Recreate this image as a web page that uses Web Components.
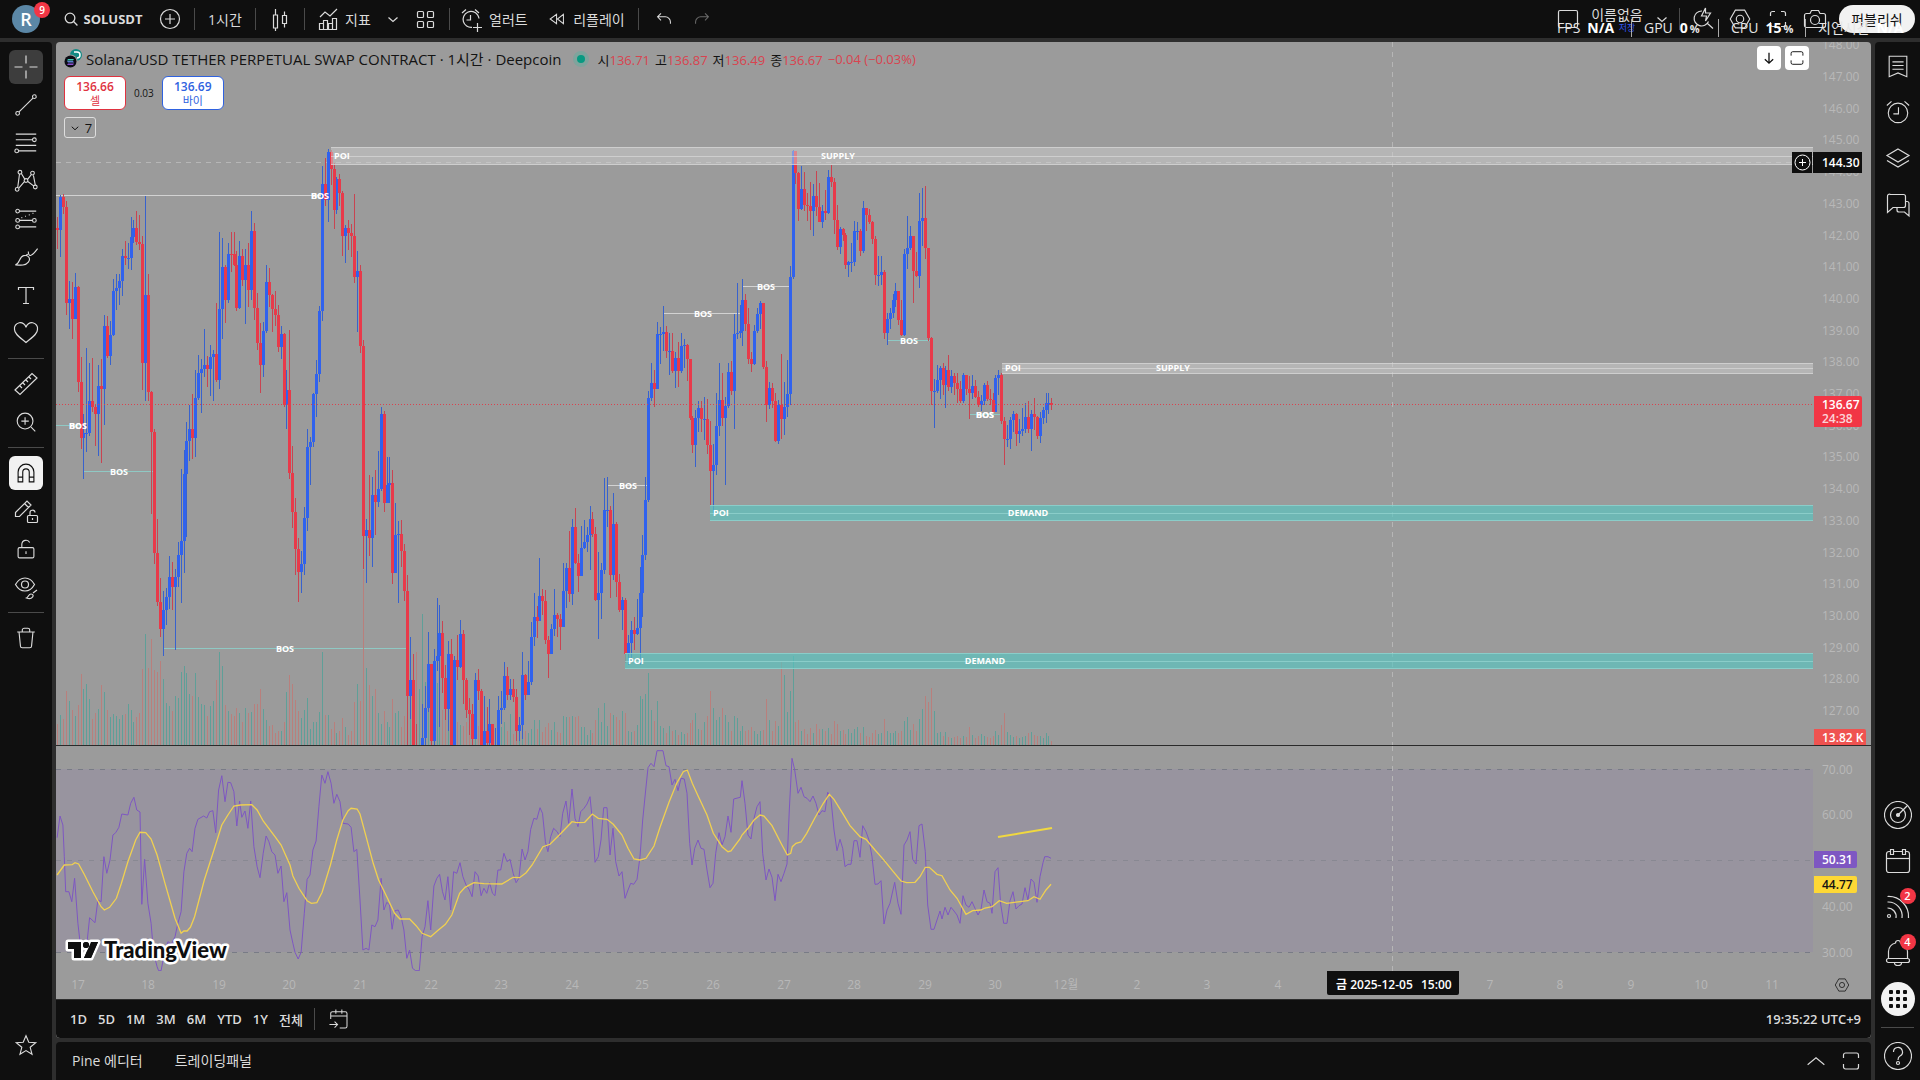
<!DOCTYPE html>
<html lang="ko">
<head>
<meta charset="utf-8">
<title>SOLUSDT</title>
<style>
  html, body { margin: 0; height: 100%; background: #2e2e2e; }
  body { font-family: "Open Sans", "Noto Sans CJK KR", sans-serif; font-size: 14px; color: #dbdbdb; }
</style>
</head>
<body>
<trading-app></trading-app>

<script>
// icons, all on a 28x28 grid
const ICONS = {
  search: '<circle cx="12.500" cy="12.500" r="7.500" stroke-width="2"/><path d="M18 18l6 6" stroke-width="2"/>',
  plus: '<circle cx="14" cy="14" r="9.500"/><path d="M14 9v10M9 14h10"/>',
  candles: '<path d="M7.500 10h4v13h-4zM9.500 4v6M9.500 23v3M16.500 10.500h4v8h-4zM18.500 6.500v4M18.500 18.500v4"/>',
  indicators: '<path d="M6 12l5-5 5 4 7-7M5.500 18.500h4v6h-4zM9.500 15.500h4v9h-4zM14.500 18.500h4v6h-4zM18.500 13.500h4v11h-4z"/>',
  down: '<path d="M9.500 12.500l4.500 4 4.500-4"/>',
  fold: '<path d="M7.500 11.500l6.500 6 6.500-6" stroke-width="2"/>',
  grid: '<rect x="6.500" y="6.500" width="6" height="6" rx="1"/><rect x="16.500" y="6.500" width="6" height="6" rx="1"/><rect x="6.500" y="16.500" width="6" height="6" rx="1"/><rect x="16.500" y="16.500" width="6" height="6" rx="1"/>',
  alertAdd: '<path d="M20.600 9.800A8 8 0 1 0 15 22.400M22 13.500a8 8 0 0 0-1.400-3.700M13.500 10v5h-4M20.500 18v9M16 22.500h9M5 8l4-3.500M18 4.500L22 8"/>',
  replay: '<path d="M13.500 8.500v11L6 14zM21.500 8.500v11L14.500 14z"/>',
  undo: '<path d="M10.500 7.500l-4 4 4 4M7 11.500h8.500a6 6 0 0 1 6 6v2"/>',
  redo: '<path d="M17.500 7.500l4 4-4 4M21 11.500h-8.500a6 6 0 0 0-6 6v2"/>',
  layout: '<rect x="4.500" y="5.500" width="19" height="17" rx="1.500"/>',
  quick: '<path d="M14 6a7.500 7.500 0 1 0 6.500 10.500M19 18l6 5.500M17.500 3l-4 8h5l-1 5 5-8h-5z"/>',
  gear: '<path d="M9 4.500h10l5.500 9.500-5.500 9.500H9L3.500 14z"/><circle cx="14" cy="14" r="4"/>',
  full: '<path d="M6.500 11V8.500a2 2 0 0 1 2-2H11M17 6.500h2.500a2 2 0 0 1 2 2V11M21.500 17v2.500a2 2 0 0 1-2 2H17M11 21.500H8.500a2 2 0 0 1-2-2V17"/>',
  camera: '<path d="M5.500 8.500H9l1.500-3h7l1.500 3h3.500a2 2 0 0 1 2 2v10a2 2 0 0 1-2 2h-17a2 2 0 0 1-2-2v-10a2 2 0 0 1 2-2z"/><circle cx="14" cy="15" r="4.500"/>',
  cross: '<path d="M14 2.500v8M14 17.500v8M2.500 14h8M17.500 14h8"/>',
  line: '<path d="M6.500 21.500L21.500 6.500"/><circle cx="5" cy="23" r="2"/><circle cx="23" cy="5" r="2"/>',
  fib: '<path d="M3 4.500h22M3 10.500h18M3 16.500h22M6 22.500h19"/><circle cx="23" cy="10.500" r="2"/><circle cx="4" cy="22.500" r="2"/>',
  pattern: '<path d="M7 6.500l-2 15M6.500 21.500l6-7M9 6l4 6.500M15.500 12.500l4-5M22 8l2 10.500M16 14.500l6.500 5"/><circle cx="7.500" cy="4.500" r="2"/><circle cx="21" cy="5.500" r="2"/><circle cx="14" cy="13.500" r="2"/><circle cx="4.500" cy="23" r="2"/><circle cx="24" cy="20.500" r="2"/>',
  forecast: '<path d="M7 5.500h18M7 15.500h14M7 22.500h18"/><circle cx="5" cy="5.500" r="2"/><circle cx="5" cy="15.500" r="2"/><circle cx="23" cy="15.500" r="2"/><circle cx="5" cy="22.500" r="2"/><path d="M9 12.500h1M13 11h1M17 9.500h1M21 8h1"/>',
  brush: '<path d="M2.500 22.500c5-1 4-9 9-10s8 3 5 7-8 3.500-14 3zM16.500 8c0 6 3 6.500 10-3M14 12l2-1"/>',
  text: '<path d="M6.500 9V6.500h15V9M14 6.500v16M11 22.500h6"/>',
  heart: '<path d="M14 23.500C8 18.500 2.500 15 2.500 10.500a5.500 5.500 0 0 1 11.500-2 5.500 5.500 0 0 1 11.500 2C25.500 15 20 18.500 14 23.500z"/>',
  ruler: '<path d="M3 20L20 3.500l5 4.500L8 24.500zM8 16l2 2M11 13l2 2M14 10l2 2M17 7l2 2"/>',
  zoom: '<circle cx="13" cy="13" r="8.500"/><path d="M19.500 19.500L24 24M13 9v8M9 13h8"/>',
  magnet: '<path d="M5.500 23.500V13a8.500 8.500 0 0 1 17 0v10.500h-5V13a3.500 3.500 0 0 0-7 0v10.500zM5.500 18.500h5M17.500 18.500h5"/>',
  penLock: '<path d="M3.500 15.500L15 4l4 4L7.500 19.500h-4zM12.500 6.500l4 4"/><rect x="15.500" y="18.500" width="10" height="7" rx="1"/><path d="M18 18.500V16a2.500 2.500 0 0 1 5-.5M20.500 21v2"/>',
  lock: '<rect x="5.500" y="12.500" width="17" height="11" rx="1.500"/><path d="M9.500 12.500V9a4.500 4.500 0 0 1 8.500-2M14 16.500v3"/>',
  eye: '<path d="M3.500 11.500C6 7 9.500 5 13 5s7 2 9.500 6.500C20 16 16.500 18 13 18s-7-2-9.500-6.500z"/><circle cx="13" cy="11.500" r="3.500"/><path d="M14.500 25c2-1 2-4 4.500-4s3 2.500.5 4-3.500.5-5 0zM21 20l4-3"/>',
  trash: '<path d="M4.500 7.500h19M10 7.500v-2a2 2 0 0 1 2-2h4a2 2 0 0 1 2 2v2M6.500 7.500l1.500 15a2 2 0 0 0 2 2h8a2 2 0 0 0 2-2l1.500-15"/>',
  star: '<path d="M14 4l3 7 7.500.5-6 5 2 7.500-6.500-4-6.500 4 2-7.500-6-5L11 11z"/>',
  list: '<path d="M4.500 3.500h19v22L14 21.500l-9.500 4zM8 9.500h12M8 13.500h12M8 17.500h12"/>',
  alarm: '<circle cx="14" cy="15" r="10.500"/><path d="M14.500 9v7H9M2 7l5-4.500M21 2.500L26 7"/>',
  layers: '<path d="M14 5l11 6.500L14 18 3 11.500zM3 16.500L14 23l11-6.500"/>',
  chat: '<path d="M6.500 4.500h13a2 2 0 0 1 2 2v9a2 2 0 0 1-2 2H9l-5.500 5V6.500a2 2 0 0 1 3-2zM22 11.500h1a2 2 0 0 1 2 2V26l-4.500-4H15a2 2 0 0 1-2-2v-2.500"/>',
  target: '<circle cx="14" cy="14" r="13.500"/><circle cx="14" cy="14" r="7.500"/><circle cx="14" cy="14" r="1.500" fill="currentColor"/><path d="M14 14l9-9"/>',
  calendar: '<rect x="2.500" y="4.500" width="23" height="21" rx="2.500"/><path d="M2.500 11.500h23"/><path fill="#0f0f0f" d="M6.500 2.500h3v5h-3zM18.500 2.500h3v5h-3z"/>',
  feed: '<circle cx="5" cy="23" r="1.500"/><path d="M3.500 15a8.500 8.500 0 0 1 8.500 10M3.500 9a14 14 0 0 1 14.500 16M3.500 3.500A20 20 0 0 1 24.500 25"/>',
  bell: '<path d="M4.500 19.500v-7a9.500 9.500 0 0 1 7-8.500 2.500 2.500 0 0 1 5 0 9.500 9.500 0 0 1 7 8.500v7M10.500 24a3.500 2.500 0 0 0 7 0"/><rect x="2.500" y="19.500" width="23" height="4" rx="2"/>',
  help: '<circle cx="14" cy="14" r="13.500"/><path d="M9.500 10a4.500 4.500 0 1 1 6.500 4c-1.500.8-2 1.500-2 4"/><circle cx="14" cy="21" r="1.500"/>',
  goto: '<path d="M5.500 14V7.500a2 2 0 0 1 2-2h15a2 2 0 0 1 2 2v15a2 2 0 0 1-2 2H16M5.500 10.500h19M11.500 3v5M18.500 3v5M4 20.500h9M10 17l3.500 3.500L10 24"/>',
  up: '<path d="M5 18l9-7.500 9 7.500"/>',
  panel: '<path d="M6.500 11V8a2 2 0 0 1 2-2h11a2 2 0 0 1 2 2v3M21.500 17v3a2 2 0 0 1-2 2h-11a2 2 0 0 1-2-2v-3"/>',
  arrow: '<path d="M14 6v16M7.500 16l6.500 6 6.500-6" stroke-width="2"/>',
}

function define(name, html, setup) {
  const tpl = document.createElement('template')
  tpl.innerHTML = html
  customElements.define(name, class extends HTMLElement {
    constructor() {
      super()
      this.attachShadow({ mode: 'open' }).appendChild(tpl.content.cloneNode(true))
    }
    connectedCallback() {
      if (setup) setup.call(this, this.shadowRoot)
    }
  })
}

define('tv-icon', `
  <style>
    :host { display: inline-flex; flex: none; }
    svg { fill: none; stroke: currentColor; stroke-width: 1.200; display: block; }
  </style>
  <svg viewBox="0 0 28 28" aria-hidden="true"></svg>
`, function (root) {
  const svg = root.querySelector('svg')
  const size = this.getAttribute('size') || 28
  svg.setAttribute('width', size)
  svg.setAttribute('height', size)
  svg.innerHTML = ICONS[this.getAttribute('name')]
})

// square button: icon="" label="" badge="" active / solid
define('tool-button', `
  <style>
    :host { display: block; width: 34px; height: 34px; }
    button {
      width: 100%; height: 100%; padding: 0; border: 0; border-radius: 6px;
      background: none; color: inherit; font: inherit;
      display: flex; align-items: center; justify-content: center; position: relative;
    }
    :host([active]) button { background: #3d3d3d; }
    :host([solid]) button { background: #f2f2f2; color: #0f0f0f; }
    :host([off]) { color: #6a6a6a; }
    span {
      position: absolute; top: 1px; right: 2px; width: 16px; height: 16px; border-radius: 8px;
      background: #f23645; color: #fff; font-size: 11px; line-height: 16px; font-weight: 600;
    }
  </style>
  <button type="button"></button>
`, function (root) {
  const btn = root.querySelector('button')
  const size = this.getAttribute('size') || 28
  btn.setAttribute('aria-label', this.getAttribute('label') || this.getAttribute('icon'))
  btn.innerHTML = `<tv-icon name="${this.getAttribute('icon')}" size="${size}"></tv-icon>`
  if (this.hasAttribute('badge')) {
    btn.insertAdjacentHTML('beforeend', `<span>${this.getAttribute('badge')}</span>`)
  }
})

define('top-bar', `
  <style>
    :host { display: flex; align-items: center; height: 38px; background: #0f0f0f; position: relative; }
    button { border: 0; background: none; color: inherit; font: inherit; padding: 0; height: 38px; display: flex; align-items: center; justify-content: center; gap: 4px; white-space: nowrap; }
    hr { width: 1px; height: 22px; margin: 0 6px; border: 0; background: #4a4a4a; flex: none; }
    tool-button { width: 36px; flex: none; }
    .wide { width: 38px; }
    .avatar { width: 52px; position: relative; }
    .avatar b { width: 28px; height: 28px; border-radius: 14px; background: #5b87a6; color: #fff; font-size: 18px; line-height: 28px; font-weight: 600; }
    .avatar i { position: absolute; top: 2px; right: 2px; width: 16px; height: 16px; border-radius: 8px; background: #f23645; color: #fff; font: 600 10px/16px "Open Sans", sans-serif; }
    .symbol { width: 100px; font-weight: 700; font-size: 13px; }
    .interval { width: 48px; }
    .ind { width: 68px; justify-content: flex-start; padding-left: 3px; gap: 3px; }
    .alert { width: 82px; justify-content: flex-start; padding-left: 1px; }
    .play { width: 94px; }
    .narrow { width: 28px; }
    .space { flex: 1; }
    .right { margin: 0 3px; }
    .name { width: 62px; flex-direction: column; gap: 0; font-size: 14px; line-height: 14px; padding-top: 4px; }
    .name small { font-size: 9px; line-height: 12px; color: #2f55f0; padding-left: 20px; }
    .publish { width: 76px; height: 28px; border-radius: 14px; background: #f2f2f2; color: #0f0f0f; margin: 0 5px 0 6px; }
    /* performance readout floats over the right end of the bar */
    .perf { position: absolute; right: 14px; top: 19px; display: flex; gap: 12px; color: #e6e6e6; font-size: 14px; white-space: nowrap; }
    .perf div { display: flex; gap: 7px; width: 74px; border-right: 1px solid #aaa; height: 18px; line-height: 18px; align-items: baseline; }
    .perf div:last-child { border: 0; width: 88px; }
    .perf b { color: #fff; }
    .perf small { margin-left: -5px; font-size: 11px; font-weight: 700; }
  </style>
  <button class="avatar" aria-label="계정"><b>R</b><i>9</i></button>
  <button class="symbol"><tv-icon name="search" size="18"></tv-icon>SOLUSDT</button>
  <tool-button icon="plus"></tool-button>
  <hr>
  <button class="interval">1시간</button>
  <hr>
  <tool-button icon="candles"></tool-button>
  <hr>
  <button class="ind"><tv-icon name="indicators"></tv-icon>지표</button>
  <tool-button class="narrow" icon="down"></tool-button>
  <tool-button icon="grid"></tool-button>
  <hr>
  <button class="alert"><tv-icon name="alertAdd"></tv-icon>얼러트</button>
  <button class="play"><tv-icon name="replay" size="24"></tv-icon>리플레이</button>
  <hr>
  <tool-button class="wide" icon="undo" size="24"></tool-button>
  <tool-button class="wide" icon="redo" size="24" off></tool-button>
  <div class="space"></div>
  <tool-button icon="layout"></tool-button>
  <button class="name">이름없음<small>저장</small></button>
  <tool-button class="narrow" icon="down"></tool-button>
  <hr class="right">
  <tool-button class="wide" icon="quick"></tool-button>
  <tool-button class="wide" icon="gear" size="26"></tool-button>
  <tool-button class="wide" icon="full"></tool-button>
  <tool-button icon="camera"></tool-button>
  <button class="publish">퍼블리쉬</button>
  <div class="perf">
    <div>FPS <b>N/A</b></div>
    <div>GPU <b>0</b><small>%</small></div>
    <div>CPU <b>15</b><small>%</small></div>
    <div>지연시간 <b>N/A</b></div>
  </div>
`)

define('left-tools', `
  <style>
    :host { display: flex; flex-direction: column; align-items: center; gap: 4px; padding: 8px 0 18px; background: #0f0f0f; border-radius: 0 4px 0 0; }
    hr { width: 36px; height: 1px; border: 0; margin: 4px 0; background: #4a4a4a; }
    .space { flex: 1; }
  </style>
  <tool-button icon="cross" active></tool-button>
  <tool-button icon="line" size="26"></tool-button>
  <tool-button icon="fib" size="26"></tool-button>
  <tool-button icon="pattern" size="26"></tool-button>
  <tool-button icon="forecast" size="26"></tool-button>
  <tool-button icon="brush" size="26"></tool-button>
  <tool-button icon="text"></tool-button>
  <tool-button icon="heart"></tool-button>
  <hr>
  <tool-button icon="ruler"></tool-button>
  <tool-button icon="zoom" size="26"></tool-button>
  <hr>
  <tool-button icon="magnet" size="26" solid></tool-button>
  <tool-button icon="penLock"></tool-button>
  <tool-button icon="lock" size="26"></tool-button>
  <tool-button icon="eye"></tool-button>
  <hr>
  <tool-button icon="trash" size="26"></tool-button>
  <div class="space"></div>
  <tool-button icon="star" size="26"></tool-button>
`)

define('right-tools', `
  <style>
    :host { display: flex; flex-direction: column; align-items: center; gap: 6px; padding: 4px 0; background: #0f0f0f; border-radius: 4px 0 0 0; }
    tool-button { width: 40px; height: 40px; }
    hr { width: 33px; height: 1px; border: 0; margin: 2px 0; background: #4a4a4a; }
    .space { flex: 1; }
    .apps { width: 34px; height: 34px; margin: 3px 0; border: 0; border-radius: 17px; background: #f2f2f2; padding: 0; display: grid; grid-template: repeat(3, 4px) / repeat(3, 4px); gap: 3px; place-content: center; }
    .apps i { background: #0f0f0f; border-radius: 1px; }
  </style>
  <tool-button icon="list" size="26"></tool-button>
  <tool-button icon="alarm" size="26"></tool-button>
  <tool-button icon="layers"></tool-button>
  <tool-button icon="chat"></tool-button>
  <div class="space"></div>
  <tool-button icon="target"></tool-button>
  <tool-button icon="calendar"></tool-button>
  <tool-button icon="feed" badge="2"></tool-button>
  <tool-button icon="bell" badge="4"></tool-button>
  <button class="apps" aria-label="apps"><i></i><i></i><i></i><i></i><i></i><i></i><i></i><i></i><i></i></button>
  <hr>
  <tool-button icon="help"></tool-button>
`)

// ---- series ----
// hourly bars: close high low volume, in ticks below 145.00 (volume in ticks of height)
const TICK = 2.57
const BAR = 2.942
const BARS = `
232 198 280 55;147 142 300 77;172 140 190 68;418 157 450 140;409 362 486 113;459 365 512 90;378 342 460 75;623 375 648 103;
765 558 794 182;754 705 870 145;754 535 802 157;671 572 762 117;687 560 700 68;703 680 786 83;632 578 811 92;641 563 829 155;
478 450 732 135;554 452 560 90;502 464 577 72;389 357 504 80;380 344 437 75;363 344 424 68;298 280 400 77;302 260 320 80;
302 265 332 105;250 197 334 90;226 205 265 60;262 183 271 72;266 192 283 82;572 248 642 195;398 144 670 285;648 345 672 198;
751 645 960 272;1062 743 1090 193;1188 975 1198 187;1258 1125 1278 217;1207 1158 1326 170;1175 1152 1246 108;1124 1070 1205 100;1150 1085 1207 88;
1124 1103 1310 127;1067 1032 1150 120;1031 846 1190 187;859 797 1112 203;774 725 1020 185;743 680 825 130;765 653 820 127;663 590 815 185;
599 553 668 123;589 563 702 106;579 486 608 104;588 555 635 75;558 528 657 100;550 540 670 114;618 420 622 167;435 237 640 238;
326 252 512 203;410 320 470 103;293 265 418 88;294 236 340 80;320 237 325 75;433 284 440 95;298 260 434 83;360 281 375 60;
322 280 473 95;385 265 430 83;234 183 411 85;433 213 462 105;522 393 540 105;577 470 650 145;492 468 608 92;365 322 497 65;
399 330 430 48;434 395 493 52;450 388 478 30;531 425 545 37;498 478 563 35;680 495 685 60;643 590 743 135;857 488 870 180;
955 787 997 158;1050 920 1117 115;1109 1023 1188 88;1090 1055 1163 70;972 942 1117 90;790 743 1005 122;777 763 886 40;654 650 790 60;
602 566 712 60;440 427 621 85;113 67 465 238;153 46 170 77;31 22 212 77;75 25 115 40;180 58 230 60;99 95 190 30;
135 87 170 35;246 132 297 70;227 218 316 45;240 206 282 25;248 215 300 37;352 140 368 110;337 285 493 157;530 321 547 113;
1017 514 1102 450;1003 975 1138 198;1022 860 1068 153;913 867 1098 125;930 848 1015 145;896 800 942 83;704 686 903 53;932 697 955 87;
887 815 932 60;882 815 932 45;1112 847 1140 117;1016 932 1112 82;1013 978 1190 88;1056 977 1097 45;1160 1037 1185 75;1430 1117 1600 170;
1388 1278 1487 140;1560 1320 1600 180;1600 1500 1620 240;1590 1560 1620 145;1538 1450 1600 337;1460 1403 1590 162;1347 1265 1470 110;1545 1347 1600 130;
1340 1308 1600 210;1325 1178 1365 160;1266 1196 1508 150;1382 1237 1420 90;1462 1350 1490 75;1322 1287 1520 80;1560 1283 1600 90;1337 1325 1570 70;
1355 1272 1387 60;1270 1234 1358 52;1387 1260 1450 50;1464 1383 1485 60;1475 1435 1530 55;1540 1450 1600 45;1388 1370 1540 58;1415 1360 1440 48;
1570 1412 1600 60;1520 1430 1600 40;1550 1458 1600 42;1500 1436 1560 38;1580 1500 1600 40;1560 1510 1600 34;1464 1430 1560 36;1460 1415 1500 45;
1378 1342 1465 60;1427 1355 1440 35;1412 1385 1440 80;1432 1385 1445 28;1518 1410 1545 40;1504 1483 1545 50;1374 1317 1540 55;1427 1372 1440 35;
1392 1340 1425 30;1278 1240 1400 40;1227 1165 1300 65;1235 1197 1280 40;1171 1075 1235 65;1185 1155 1220 33;1284 1157 1295 45;1322 1275 1382 57;
1257 1245 1322 38;1222 1155 1275 60;1232 1215 1278 33;1252 1217 1310 30;1160 1087 1250 75;1101 1087 1203 73;1168 1005 1188 72;995 975 1195 75;
1087 947 1090 73;1120 1065 1162 75;1049 991 1120 45;1034 976 1050 45;1016 995 1060 25;974 941 1105 38;1013 957 1020 32;1182 995 1185 63;
1165 1060 1282 95;1105 1087 1230 60;950 869 1115 108;950 866 995 50;1117 940 1177 83;987 907 1130 78;1137 982 1175 73;1207 1115 1212 63;
1182 1175 1260 88;1320 1177 1345 83;1292 1272 1350 37;1260 1235 1330 33;1270 1227 1310 35;1253 1180 1272 52;1165 1098 1350 127;1067 1015 1225 117;
924 865 1080 132;664 645 930 185;625 573 670 90;640 590 685 62;499 468 640 113;498 480 575 50;494 427 542 43;541 478 560 30;
541 495 605 50;593 497 600 37;560 545 637 38;593 520 635 25;530 495 600 33;527 512 585 27;563 523 620 30;714 562 720 57;
783 710 805 65;715 695 840 82;688 670 750 42;718 672 750 38;716 660 770 60;785 665 808 75;850 722 940 140;836 780 960 95;
736 650 860 65;667 573 760 72;714 600 735 95;684 660 886 78;597 573 690 58;645 567 655 35;498 447 742 75;496 368 512 70;
492 423 510 35;411 357 530 50;474 395 490 35;562 432 575 38;576 545 595 47;492 475 578 37;448 433 495 28;419 415 487 35;
583 418 588 38;682 567 725 118;637 622 692 65;672 625 690 35;773 650 777 62;680 667 780 50;717 550 768 213;685 622 757 180;
654 566 712 85;352 325 680 140;27 25 358 230;85 27 112 60;177 82 207 65;126 68 180 37;167 82 182 42;170 135 207 28;
183 108 232 43;145 113 247 32;171 80 195 53;210 110 212 40;183 167 227 40;188 128 205 37;94 77 190 43;108 65 122 28;
205 97 242 62;275 167 282 53;230 223 293 37;244 225 260 38;320 240 332 28;313 310 352 40;313 265 340 32;235 207 325 42;
235 212 257 45;284 230 297 30;175 158 290 47;192 177 235 22;210 178 215 20;255 207 268 30;346 248 373 38;346 297 375 27;
338 297 372 30;495 333 512 68;460 445 528 37;445 433 485 32;412 395 458 32;387 368 430 35;462 387 475 30;500 410 503 37;
293 280 503 62;278 195 332 73;248 220 282 38;337 247 418 53;350 288 353 37;209 135 380 68;201 123 272 92;278 117 305 127;
510 277 516 110;646 507 680 147;646 615 740 87;618 578 650 32;586 580 665 33;630 573 655 22;590 580 688 33;635 553 645 20;
607 590 650 18;625 600 655 20;640 600 675 24;672 620 675 18;604 600 675 22;640 604 655 20;650 607 717 45;632 603 665 25;
660 618 663 18;682 645 687 24;670 655 697 28;630 625 682 22;665 620 670 20;668 640 680 18;698 650 700 22;612 603 700 37;
604 590 655 25;723 600 730 52;768 712 834 83;768 732 788 33;720 712 795 26;703 697 750 20;755 702 787 22;748 718 778 18;
742 690 760 20;712 675 752 24;744 672 752 32;704 695 798 34;712 663 745 26;760 710 768 22;715 700 778 24;695 685 730 18;
677 650 728 32;677 650 705 24;680 662 693 10`
  .trim().split(/;\s*/).map(row => row.trim().split(' ').map(Number))

const RSI_A = `20,293 28,228 36,255 40,350 44,455 53,455 61,485 69,415 78,550 84,605 104,605 111,533 126,548 134,480 143,485 151,350 159,400 168,360 176,285 184,278 193,262 201,222 218,225 226,190 235,172 243,210 252,216 257,493 265,358 274,490 283,550 290,640 300,680 304,692 311,692 320,640 330,605 340,612 350,590 358,550 367,515 375,395 383,340 391,325 398,335 406,265 414,238 430,228 439,234 447,215 456,212 464,278 472,150 481,107 490,185 498,127 506,128 515,155 523,258 531,183 537,232 546,213 554,265 562,183 571,320 580,380 588,413 597,340 605,288 613,305 621,335 630,345 638,400 647,378 655,485 663,458 672,570 680,610 686,637 695,657 703,637 712,520 720,418 728,405 736,330 745,303 753,200 761,105 770,130 778,95 787,130 795,190 803,163 812,185 820,250 835,252 843,262 851,335 859,328 868,480 876,630 885,625 893,630 901,555 910,560 918,540 927,415 935,510 943,487 951,495 958,568 966,512 975,510 983,530 991,570 999,655 1007,630 1015,685 1024,692 1034,692 1042,590 1050,560 1058,482 1066,570 1075,438 1083,415 1091,403 1099,455 1106,480 1114,410 1122,510 1130,395 1139,400 1148,368 1156,410 1165,435 1173,447 1182,470 1190,395 1199,408 1207,467 1215,445 1223,460 1231,428 1239,460 1246,467 1254,390 1262,390 1271,340 1280,365 1288,358 1297,400 1305,428 1313,415 1322,327 1330,360 1338,335 1346,268 1355,235 1363,238 1372,203 1379,220 1387,305 1394,335 1402,290 1410,265 1420,275`
const RSI_B = `0,290 8,220 18,183 26,250 36,147 45,235 54,260 62,215 72,205 81,192 90,170 97,240 105,367 115,350 123,300 131,203 141,203 150,345 159,265 167,365 177,408 186,395 195,475 204,450 212,430 221,433 231,418 240,350 248,240 257,150 264,83 273,70 282,80 291,32 309,32 318,77 327,80 336,135 345,118 354,152 363,115 373,117 381,160 389,310 396,375 404,325 414,300 423,325 432,328 441,390 450,443 459,430 467,340 477,278 486,315 495,290 504,228 513,277 521,177 541,172 546,122 555,190 564,285 573,297 582,235 591,200 600,185 608,340 618,420 627,387 636,412 645,482 654,403 663,425 672,400 681,372 688,210 696,55 704,90 714,160 723,142 732,170 741,175 750,185 759,168 768,190 777,225 786,212 795,215 803,157 812,170 822,270 831,332 840,298 848,325 855,380 864,373 873,373 882,302 891,302 900,352 908,257 918,275 927,300 936,350 945,433 954,432 963,422 972,552 981,510 990,490 1004,427 1014,490 1023,523 1032,315 1041,300 1050,275 1058,358 1068,372 1077,257 1086,252 1096,335 1103,495 1113,568 1122,568 1131,540 1140,513 1146,537 1155,502 1164,525 1173,502 1182,513 1191,525 1200,550 1209,467 1218,495 1227,502 1236,485 1245,505 1254,525 1263,508 1272,450 1281,485 1290,490 1296,520 1305,395 1314,383 1322,493 1331,550 1341,550 1350,482 1359,455 1368,507 1377,497 1386,492 1395,443 1404,480 1413,417 1422,427 1431,487 1440,410 1449,368 1454,350 1464,350 1473,355`
const MA_A = `20,405 40,375 62,374 70,368 80,372 97,405 120,455 143,500 152,510 167,502 186,475 200,430 218,365 240,300 252,277 268,278 283,297 300,345 322,430 350,535 367,580 375,573 384,573 393,562 405,530 432,420 462,320 481,255 498,225 515,198 533,195 565,194 580,210 597,243 630,290 647,315 672,375 680,408 697,445 720,482 732,490 747,488 762,457 785,375 803,300 820,240 835,212 843,205 860,207 868,222 885,290 905,370 920,420 945,475 965,520 980,537 1007,537 1025,557 1042,580 1066,590 1085,572 1107,553 1125,525 1147,460 1162,442 1187,428 1215,431 1265,432 1297,412 1315,413 1333,398 1350,375 1380,320 1400,313`
const MA_B = `0,283 36,245 50,248 74,247 97,222 115,235 141,238 160,253 186,285 204,325 222,357 240,360 258,355 282,318 300,262 327,187 350,130 370,95 382,90 397,130 414,167 441,225 460,280 486,320 504,335 513,333 540,297 546,285 564,265 582,240 600,225 612,228 636,257 663,310 682,345 692,340 697,320 708,310 723,306 740,280 764,235 790,190 808,163 822,178 848,220 870,257 900,290 918,298 945,330 970,358 1000,395 1023,423 1040,428 1065,427 1080,410 1096,382 1108,382 1131,403 1146,407 1170,450 1191,475 1218,523 1238,512 1262,510 1275,504 1296,500 1318,482 1340,490 1404,482 1422,470 1440,478 1458,450 1473,433`

const barX = n => Math.round(1 + BAR * n)
const tickY = t => Math.round(98 + t / TICK)

function drawBars() {
  const d = { up: '', down: '', upWick: '', downWick: '', upVol: '', downVol: '' }
  let open = 225
  BARS.forEach(([close, high, low, vol], n) => {
    const x = barX(n)
    const side = close <= open ? 'up' : 'down'
    const top = tickY(Math.min(open, close))
    const h = Math.max(1, tickY(Math.max(open, close)) - top)
    d[side] += `M${x - 1} ${top}h3v${h}h-3z`
    d[side + 'Wick'] += `M${x} ${tickY(high)}h1V${tickY(low)}h-1z`
    d[side + 'Vol'] += `M${x} 703h1v${-Math.round(vol / TICK)}h-1z`
    open = close
  })
  return `
    <path fill="#5f9f98" d="${d.upVol}"/><path fill="#b97f7c" d="${d.downVol}"/>
    <path fill="#3862cd" d="${d.upWick}"/><path fill="#c94451" d="${d.downWick}"/>
    <path fill="#3062ee" d="${d.up}"/><path fill="#e83a4a" d="${d.down}"/>`
}

// order block from x to the right edge, with its two captions
function zone(kind, x, y, h, mid, name) {
  const c = kind === 'demand' ? ['#58c4bf', '#9ad8d4'] : ['#d0d0d0', '#dcdcdc']
  return `<rect x="${x}" y="${y}" width="100%" height="${h}" fill="${c[0]}" fill-opacity="${kind === 'demand' ? .68 : .5}"/>
    <path d="M${x} ${y + .5}h3000M${x} ${y + (h >> 1) + .5}h3000M${x} ${y + h - .5}h3000" stroke="${c[1]}" stroke-opacity=".65"/>
    <text x="${x + 3}" y="${y + (h >> 1) + 3}">POI</text>
    <text x="${mid}" y="${y + (h >> 1) + 3}" text-anchor="middle">${name}</text>`
}

function bos(x1, x2, y, mid, color) {
  return `<path d="M${x1} ${y + .5}H${x2}" stroke="${color}"/><text x="${mid}" y="${y + 4}" text-anchor="middle">BOS</text>`
}

define('price-pane', `
  <style>
    :host { display: grid; grid-template-columns: 1fr 58px; border-bottom: 1px solid #2a2a2a; position: relative; min-height: 0; overflow: hidden; }
    svg { width: 100%; height: 100%; display: block; overflow: hidden; min-height: 0; }
    .plot text { font: 700 9px "Open Sans", sans-serif; fill: #fff; }
    .plot .add { overflow: visible; }
    .axis text { font: 12px "Open Sans", sans-serif; fill: #b8b8b8; }
    .axis .tag { fill: #fff; font-weight: 600; }
    .legend { position: absolute; left: 8px; top: 5px; color: #131313; display: flex; flex-direction: column; gap: 8px; align-items: flex-start; }
    h1 { margin: 0; font-size: 15px; line-height: 24px; font-weight: 400; white-space: nowrap; }
    .title, .quote, .trade { display: flex; align-items: center; }
    .title { height: 24px; gap: 4px; }
    .coin { width: 18px; height: 20px; }
    .live { width: 8px; height: 8px; border-radius: 8px; background: #089981; border: 4px solid #7fa49d; margin: 0 4px 0 8px; }
    .quote { font-size: 13px; gap: 5px; white-space: nowrap; }
    .quote span span, .quote .red { color: #d9434f; }
    .trade { gap: 8px; font-size: 10px; margin-top: -3px; }
    .trade button { width: 62px; height: 34px; box-sizing: border-box; padding: 0; border: 1px solid; border-radius: 6px; background: #fff; font: 600 12px/15px "Open Sans", "Noto Sans CJK KR", sans-serif; }
    .trade small { display: block; font-size: 11px; line-height: 13px; font-weight: 400; }
    .sell { color: #e0323f; }
    .buy { color: #2f62e0; }
    .fold { width: 32px; height: 21px; box-sizing: border-box; padding: 0; border: 1px solid #dedede; border-radius: 3px; background: none; color: #131313; font: 13px "Open Sans", sans-serif; display: flex; align-items: center; justify-content: center; gap: 3px; margin-top: -1px; }
    .corner { position: absolute; right: 62px; top: 4px; display: flex; gap: 4px; color: #0f0f0f; }
    .corner tool-button { width: 24px; height: 24px; background: #fff; border-radius: 4px; }
  </style>
  <svg class="plot"></svg>
  <svg class="axis"></svg>
  <div class="legend">
    <div class="title">
      <svg class="coin" viewBox="0 0 18 20">
        <circle cx="12" cy="6" r="6" fill="#128a84"/><path d="M10 3h3a3 3 0 0 1 0 6" fill="none" stroke="#fff" stroke-width="1.500"/>
        <circle cx="6.500" cy="12.500" r="7" fill="#9b9b9b"/><circle cx="6.500" cy="12.500" r="6" fill="#0c0c14"/>
        <path d="M4 10h6l-1 1.500H3z" fill="#3fc6b6"/><path d="M3 12h6l1 1.500H4z" fill="#5a7fd0"/><path d="M4 14.500h6L9 16H3z" fill="#8a4fd0"/>
      </svg>
      <h1>Solana/USD TETHER PERPETUAL SWAP CONTRACT · 1시간 · Deepcoin</h1>
      <i class="live"></i>
      <div class="quote">
        <span>시<span>136.71</span></span><span>고<span>136.87</span></span><span>저<span>136.49</span></span><span>종<span>136.67</span></span><span class="red">−0.04 (−0.03%)</span>
      </div>
    </div>
    <div class="trade">
      <button class="sell">136.66<small>셀</small></button>0.03<button class="buy">136.69<small>바이</small></button>
    </div>
    <button class="fold"><tv-icon name="fold" size="14"></tv-icon>7</button>
  </div>
  <div class="corner">
    <tool-button icon="arrow" size="18"></tool-button>
    <tool-button icon="panel" size="22"></tool-button>
  </div>
`, function (root) {
  const white = '#d2d2d2', teal = '#8fc9c4'
  root.querySelector('.plot').innerHTML = `
    <path d="M0 120.500H3000M1336.500 0V3000" stroke="#b6b6b6" stroke-dasharray="5 5"/>
    ${bos(0, 274, 153, 264, white)}${bos(0, 27, 383, 22, teal)}${bos(28, 99, 429, 63, teal)}${bos(107, 352, 606, 229, teal)}
    ${bos(551, 593, 443, 572, white)}${bos(607, 687, 271, 647, white)}${bos(686, 735, 244, 710, white)}
    ${bos(831, 876, 298, 853, teal)}${bos(913, 946, 372, 929, teal)}
    ${drawBars()}
    ${zone('supply', 275, 105, 18, 782, 'SUPPLY')}${zone('supply', 946, 321, 11, 1117, 'SUPPLY')}
    ${zone('demand', 654, 463, 16, 972, 'DEMAND')}${zone('demand', 569, 611, 16, 929, 'DEMAND')}
    ${[[264, 153], [22, 383], [929, 372]].map(p => `<text x="${p[0]}" y="${p[1] + 4}" text-anchor="middle">BOS</text>`).join('')}
    <path d="M0 362.500H3000" stroke="#d9434f" stroke-dasharray="1 2"/>
    <svg class="add" x="100%"><path d="M-21 110h20v21h-20z" fill="#0f0f0f"/><g fill="none" stroke="#fff"><circle cx="-10.500" cy="120.500" r="7.500"/><path d="M-14 120.500h7M-10.500 117v7"/></g></svg>`
  let axis = ''
  for (let p = 148; p >= 127; p--) {
    axis += `<text x="9" y="${Math.round(39 + (147 - p) * 31.7)}">${p}.00</text>`
  }
  root.querySelector('.axis').innerHTML = axis + `
    <path d="M0 110h49v21H0z" fill="#0f0f0f"/><text class="tag" x="9" y="125">144.30</text>
    <path d="M1 354h46a2 2 0 0 1 2 2v27a2 2 0 0 1-2 2H1z" fill="#f23645"/><text class="tag" x="9" y="367">136.67</text><text class="tag" x="9" y="381" fill-opacity=".8">24:38</text>
    <path d="M1 687h50a2 2 0 0 1 2 2v14H1z" fill="#ef5350"/><text class="tag" x="9" y="700">13.82 K</text>`
})

define('rsi-pane', `
  <style>
    :host { display: grid; grid-template-columns: 1fr 58px; height: 225px; }
    svg { width: 100%; height: 225px; display: block; overflow: hidden; }
    .axis text { font: 12px "Open Sans", sans-serif; fill: #b8b8b8; }
    .axis .tag { font-weight: 600; }
    .logo { font: 900 22px Lato, sans-serif; }
  </style>
  <svg class="plot"></svg>
  <svg class="axis"></svg>
`, function (root) {
  const path = (src, x0, kx) => src.split(' ').map(p => {
    const [x, y] = p.split(',')
    return `${(x0 + x / kx).toFixed(1)} ${(y / 3 - 6).toFixed(1)}`
  }).join('L')
  const curve = (a, b) => 'M' + path(a, -6, 2.8) + 'L' + path(b, 504, 3)
  root.querySelector('.plot').innerHTML = `
    <rect y="23" width="100%" height="183" fill="#7e57c2" fill-opacity=".1"/>
    <path d="M0 23.500H3000M0 206.500H3000" stroke="#787b86" stroke-dasharray="5 6"/>
    <path d="M0 114.500H3000" stroke="#888892" stroke-dasharray="5 6"/>
    <path d="M1336.500 0V225" stroke="#b6b6b6" stroke-dasharray="5 5"/>
    <path d="${curve(RSI_A, RSI_B)}" fill="none" stroke="#7e57c2"/>
    <path d="${curve(MA_A, MA_B)}" fill="none" stroke="#f0d050" stroke-width="1.300"/>
    <path d="M942 91L996 82" stroke="#f0d840" stroke-width="2"/>
    <g fill="#0f0f0f" stroke="#fff" stroke-width="5" stroke-linejoin="round" paint-order="stroke">
      <path d="M12 196h13v16h-7v-9h-6zM35 196h7l-7 16h-7z"/><circle cx="30" cy="199" r="3"/>
      <text class="logo" x="48" y="212">TradingView</text>
    </g>
    <path fill="#0f0f0f" d="M12 196h13v16h-7v-9h-6zM35 196h7l-7 16h-7z"/><circle cx="30" cy="199" r="3" fill="#0f0f0f"/>`
  root.querySelector('.axis').innerHTML = `
    <text x="9" y="28">70.00</text><text x="9" y="73">60.00</text><text x="9" y="165">40.00</text><text x="9" y="211">30.00</text>
    <path d="M1 105h41a2 2 0 0 1 2 2v13a2 2 0 0 1-2 2H1z" fill="#7e57c2"/><text class="tag" x="9" y="118" style="fill:#fff">50.31</text>
    <path d="M1 130h41a2 2 0 0 1 2 2v13a2 2 0 0 1-2 2H1z" fill="#fdd835"/><text class="tag" x="9" y="143" style="fill:#131313">44.77</text>`
})

define('time-axis', `
  <style>
    :host { display: grid; grid-template-columns: 1fr 58px; height: 28px; border-bottom: 1px solid #2e2e2e; }
    svg { width: 100%; height: 28px; display: block; overflow: hidden; }
    text { font: 12px "Open Sans", "Noto Sans CJK KR", sans-serif; fill: #b8b8b8; text-anchor: middle; }
    .cursor { fill: #fff; font-weight: 600; font-size: 12px; text-anchor: start; white-space: pre; }
    tool-button { width: 58px; height: 28px; color: #131313; }
  </style>
  <svg></svg>
  <tool-button icon="gear" size="18"></tool-button>
`, function (root) {
  const days = ['17', '18', '19', '20', '21', '22', '23', '24', '25', '26', '27', '28', '29', '30', '12월', '2', '3', '4', '', '', '7', '8', '9', '10', '11']
  root.querySelector('svg').innerHTML = days.map((d, i) => d && `<text x="${Math.round(21.5 + i * 70.6)}" y="18">${d}</text>`).join('') + `
    <path d="M1271 0h132v22a2 2 0 0 1-2 2h-128a2 2 0 0 1-2-2z" fill="#0f0f0f"/>
    <text class="cursor" x="1280" y="18">금 2025-12-05</text><text class="cursor" x="1365" y="18">15:00</text>`
})

define('range-bar', `
  <style>
    :host { display: flex; align-items: center; gap: 11px; height: 38px; padding: 0 10px 0 14px; background: #0f0f0f; border-radius: 0 0 4px 4px; }
    button { border: 0; padding: 0; background: none; color: inherit; font: inherit; font-size: 13px; font-weight: 600; }
    .all { font-weight: 500; }
    hr { width: 1px; height: 22px; border: 0; margin: 0; background: #4a4a4a; }
    time { margin-left: auto; font-size: 13px; font-weight: 600; }
  </style>
  <button>1D</button><button>5D</button><button>1M</button><button>3M</button><button>6M</button><button>YTD</button><button>1Y</button><button class="all">전체</button>
  <hr>
  <tv-icon name="goto" size="24"></tv-icon>
  <time>19:35:22 UTC+9</time>
`)

define('panel-bar', `
  <style>
    :host { display: flex; align-items: center; height: 38px; padding: 0 3px 0 16px; gap: 32px; background: #0f0f0f; border-radius: 4px 4px 0 0; }
    button { border: 0; padding: 0; background: none; color: inherit; font: inherit; line-height: 20px; }
    div { margin-left: auto; display: flex; gap: 1px; }
  </style>
  <button>Pine 에디터</button><button>트레이딩패널</button>
  <div><tool-button icon="up" size="26"></tool-button><tool-button icon="panel"></tool-button></div>
`)

define('trading-app', `
  <style>
    :host { display: grid; grid-template: auto 1fr / 52px 1fr 45px; gap: 4px; min-height: 100vh; }
    top-bar { grid-column: 1 / -1; }
    main { display: grid; grid-template-rows: 1fr auto; gap: 4px; min-width: 0; }
    .chart { display: grid; grid-template-rows: minmax(400px, 1fr) auto auto auto; background: #9b9b9b; border-radius: 4px; overflow: hidden; min-height: 0; }
  </style>
  <top-bar></top-bar>
  <left-tools></left-tools>
  <main>
    <div class="chart">
      <price-pane></price-pane>
      <rsi-pane></rsi-pane>
      <time-axis></time-axis>
      <range-bar></range-bar>
    </div>
    <panel-bar></panel-bar>
  </main>
  <right-tools></right-tools>
`)
</script>
</body>
</html>
